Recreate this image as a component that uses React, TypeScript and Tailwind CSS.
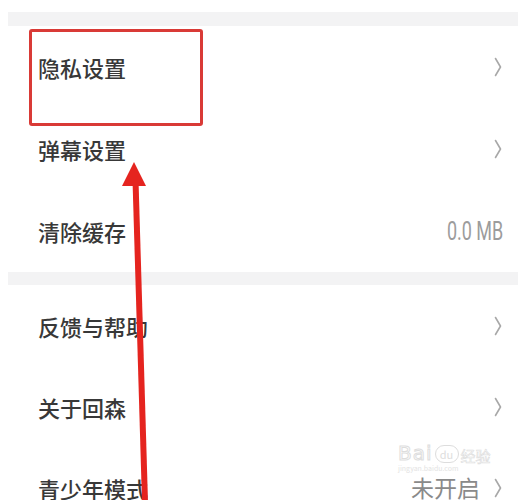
import React from "react";

const Chevron = () => (
  <svg width="8" height="20" viewBox="0 0 8 20" className="shrink-0">
    <path d="M1.5 1.5 L6.5 10 L1.5 18.5" fill="none" stroke="#a8a8a8" strokeWidth="1.6" strokeLinecap="round" strokeLinejoin="round" />
  </svg>
);

type Row = { label: string; right?: React.ReactNode; chevron?: boolean; h?: string };

const Item = ({ label, right, chevron = true, h = "h-[82px]" }: Row) => (
  <div className={`flex items-center pl-[38px] pr-[16px] ${h}`}>
    <span className="flex-1 text-[22px] font-medium leading-none text-[#383838]">{label}</span>
    {right}
    {chevron && <Chevron />}
  </div>
);

export default function App() {
  return (
    <div
      className="relative h-[500px] w-[518px] overflow-hidden bg-white"
      style={{ fontFamily: '"Noto Sans CJK SC", "Noto Sans", sans-serif' }}
    >
      <div className="h-[12px]" />
      <div className="ml-[8px] h-[14px] bg-[#f3f3f4]" />
      <Item label="隐私设置" />
      <Item label="弹幕设置" />
      <Item
        label="清除缓存"
        chevron={false}
        right={
          <span
            className="mr-[-1px] inline-block origin-right scale-x-[0.72] text-[25px] leading-none text-[#9c9c9c]"
            style={{ fontFamily: "Roboto, sans-serif" }}
          >
            0.0 MB
          </span>
        }
      />
      <div className="ml-[8px] h-[13px] bg-[#f3f3f4]" />
      <Item label="反馈与帮助" h="h-[81px]" />
      <Item label="关于回森" h="h-[81px]" />
      <Item
        label="青少年模式"
        h="h-[81px]"
        right={<span className="mr-[14px] text-[23px] leading-none text-[#8a8a8a]">未开启</span>}
      />

      {/* Red highlight box */}
      <div className="absolute left-[29px] top-[29px] h-[97px] w-[174px] rounded-[3px] border-[3px] border-[#d93a36]" />

      {/* Red arrow */}
      <svg className="absolute left-0 top-0" width="518" height="500" viewBox="0 0 518 500">
        <line x1="135.5" y1="180" x2="145" y2="502" stroke="#e5241f" strokeWidth="6" />
        <path d="M134 162 L146 186 L122 186 Z" fill="#e5241f" />
      </svg>

      {/* Baidu watermark */}
      <div className="pointer-events-none absolute left-[398px] top-[443px] flex flex-col items-start opacity-60">
        <div className="flex items-end gap-[2px] text-[#c8c8c8]">
          <span
            className="text-[20px] leading-none tracking-[1px]"
            style={{ fontFamily: '"DejaVu Sans", sans-serif', WebkitTextStroke: "1px #c8c8c8", color: "transparent" }}
          >
            Bai
          </span>
          <span className="relative flex h-[18px] w-[24px] items-center justify-center rounded-full border border-[#c8c8c8] text-[11px] leading-none">
            du
          </span>
          <span className="text-[15px] leading-none" style={{ WebkitTextStroke: "0.6px #c8c8c8", color: "transparent" }}>
            经验
          </span>
        </div>
        <div className="mt-[2px] text-[7px] leading-none text-[#d0d0d0]">jingyan.baidu.com</div>
      </div>
    </div>
  );
}
